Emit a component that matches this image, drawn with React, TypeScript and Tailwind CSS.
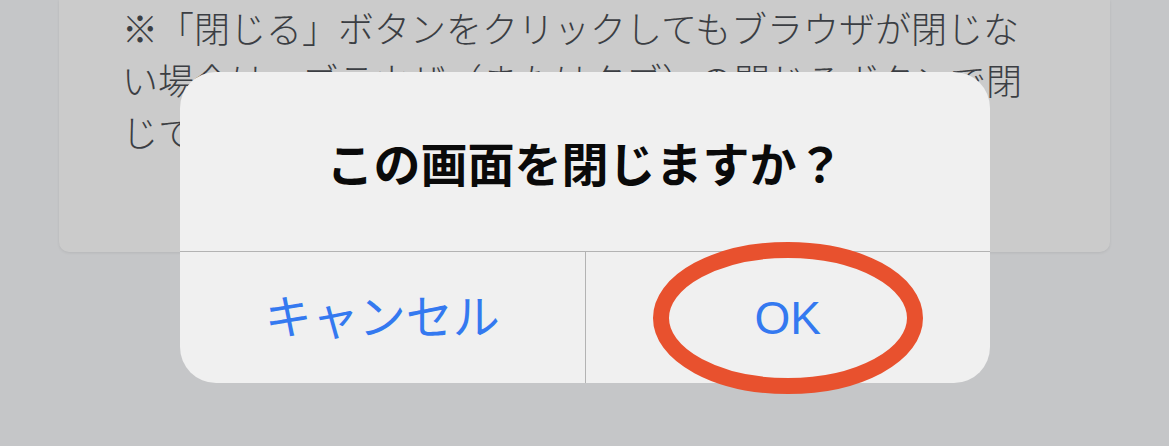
import React from "react";

const jp = { fontFamily: '"Noto Sans CJK JP", "Noto Sans", sans-serif' };
const ui = { fontFamily: '"Liberation Sans", "Noto Sans CJK JP", sans-serif' };

export default function App() {
  return (
    <div className="relative h-[446px] w-full overflow-hidden bg-[#c5c6c8]" style={jp}>
      {/* page card behind the alert */}
      <div className="mx-[59px] rounded-b-[10px] bg-[#cbcbcb] px-[63px] pt-px pb-[95px] shadow-[0_1px_3px_rgba(0,0,0,0.08)]">
        <p className="text-[36px] leading-[52px] font-light text-[#3b3e43]">
          ※「閉じる」ボタンをクリックしてもブラウザが閉じない場合は、ブラウザ（またはタブ）の閉じるボタンで閉じてください。
        </p>
      </div>

      {/* alert dialog */}
      <div className="absolute left-[180px] top-[72px] w-[810px] rounded-[36px] bg-[#f0f0f0]">
        <div className="flex h-[179px] items-center justify-center">
          <h2 className="text-[47px] leading-none font-bold text-[#0a0a0a]">この画面を閉じますか？</h2>
        </div>
        <div className="flex h-[132px] border-t border-[#b3b3b3]">
          <button className="flex flex-1 items-center justify-center text-[47px] leading-none text-[#3479f0]" style={ui}>
            キャンセル
          </button>
          <div className="w-px bg-[#b3b3b3]" />
          <button className="relative flex flex-1 items-center justify-center text-[46px] leading-none text-[#3479f0]" style={ui}>
            OK
            <svg
              className="pointer-events-none absolute left-1/2 top-1/2 -ml-[140px] -mt-[80px] overflow-visible"
              width="280"
              height="160"
              viewBox="0 0 280 160"
            >
              <ellipse cx="140" cy="80" rx="127" ry="68" fill="none" stroke="#e8512e" strokeWidth="16" />
            </svg>
          </button>
        </div>
      </div>
    </div>
  );
}
